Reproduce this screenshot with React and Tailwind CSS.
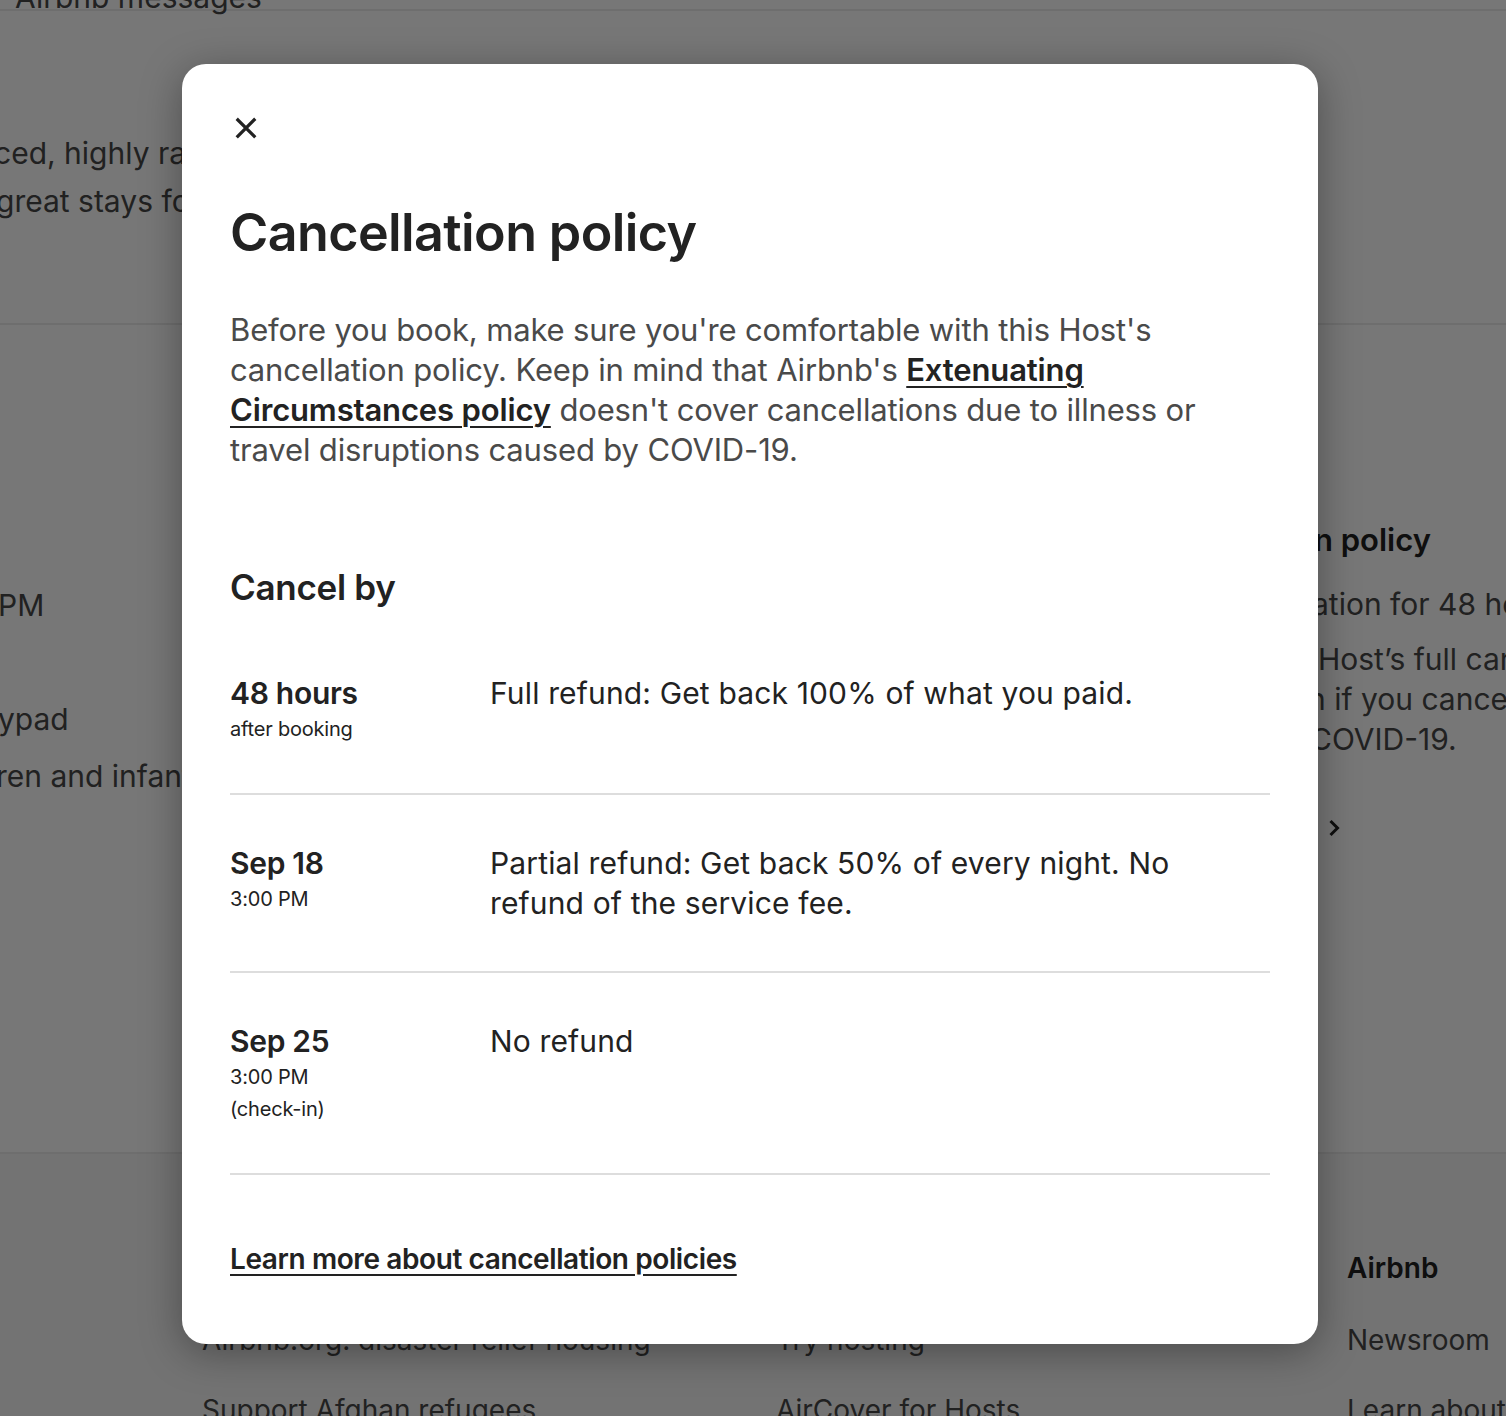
import React from "react";

const font = { fontFamily: "Inter, 'Noto Sans', sans-serif" };

function CloseIcon() {
  return (
    <svg viewBox="0 0 32 32" className="w-[26px] h-[26px]" fill="none" stroke="#222" strokeWidth="4" strokeLinecap="square">
      <path d="M6 6l20 20M26 6L6 26" />
    </svg>
  );
}

function Row({ title, sub, text }) {
  return (
    <div className="flex border-b-2 border-[#dddddd] pt-[48px] pb-[48px]">
      <div className="w-[260px] shrink-0">
        <div className="text-[30px] leading-[40px] font-semibold text-[#222] tracking-[-0.3px]">{title}</div>
        {sub.map((s, i) => (
          <div key={i} className="text-[20px] leading-[32px] text-[#222] tracking-[-0.2px]">{s}</div>
        ))}
      </div>
      <div className="flex-1 text-[30px] leading-[40px] text-[#222] tracking-[0.15px] pr-[60px]">{text}</div>
    </div>
  );
}

export default function App() {
  return (
    <div className="relative w-[1506px] h-[1416px] overflow-hidden bg-white" style={font}>
      {/* Background page */}
      <div className="-mt-[34px] text-[#484848] text-[30px]">
        <div className="h-[43px] flex items-end">
          <div className="whitespace-nowrap leading-[44px] -ml-[2px] translate-y-[10px]">· Airbnb messages</div>
        </div>
        <div className="border-t-2 border-[#ebebeb] h-[314px] pt-[118px]">
          <div className="whitespace-nowrap leading-[48px] -ml-[6px]">ced, highly rated Hosts who are committed</div>
          <div className="whitespace-nowrap leading-[48px] -ml-[4px]">great stays for guests.</div>
        </div>
        <div className="border-t-2 border-[#ebebeb] h-[829px] flex">
          <div className="w-[1308px] shrink-0 pt-[252px]">
            <div className="whitespace-nowrap leading-[57px] -ml-[2px]">PM</div>
            <div className="whitespace-nowrap leading-[57px]">&nbsp;</div>
            <div className="whitespace-nowrap leading-[57px] -ml-[2px]">ypad</div>
            <div className="whitespace-nowrap leading-[57px] -ml-[4px]">ren and infants</div>
          </div>
          <div className="flex-1 pt-[193px] whitespace-nowrap">
            <div className="text-[31px] leading-[44px] font-semibold text-[#222] pl-[6px]">n policy</div>
            <div className="mt-[22px] leading-[40px] pl-[4px]">ation for 48 hours.</div>
            <div className="mt-[15px] leading-[40px] pl-[10px]">Host’s full cancellation</div>
            <div className="leading-[40px]">n if you cancel because of</div>
            <div className="leading-[40px] pl-[2px]">COVID-19.</div>
            <div className="mt-[60px] pl-[20px]">
              <svg viewBox="0 0 12 18" className="w-[12px] h-[18px]" fill="none" stroke="#222" strokeWidth="3">
                <path d="M2.5 2l7 7-7 7" />
              </svg>
            </div>
          </div>
        </div>
        <div className="border-t-2 border-[#ebebeb] bg-[#f7f7f7] pt-[94px] pl-[202px] grid grid-cols-[574px_571px_1fr] text-[28px]">
          {[
            ["Support", "Airbnb.org: disaster relief housing", "Support Afghan refugees"],
            ["Hosting", "Try hosting", "AirCover for Hosts"],
            ["Airbnb", "Newsroom", "Learn about new features"],
          ].map((col, i) => (
            <div key={i} className="whitespace-nowrap">
              <div className="font-semibold text-[#222] leading-[40px]">{col[0]}</div>
              <div className="mt-[32px] leading-[40px]">{col[1]}</div>
              <div className="mt-[30px] leading-[40px]">{col[2]}</div>
            </div>
          ))}
        </div>
      </div>

      {/* Overlay */}
      <div className="absolute inset-0 bg-black/[0.533]" />

      {/* Modal */}
      <div className="absolute left-[182px] top-[64px] w-[1136px] h-[1280px] bg-white rounded-[24px] shadow-[0_8px_40px_rgba(0,0,0,0.35)] px-[48px] pt-[48px]">
        <button className="w-[32px] h-[32px] flex items-center justify-center">
          <CloseIcon />
        </button>
        <h1 className="mt-[61px] text-[52px] leading-[56px] font-semibold text-[#222] tracking-[-0.6px]">Cancellation policy</h1>
        <p className="mt-[49px] text-[31px] leading-[40px] text-[#4a4a4a] tracking-[-0.15px] pr-[60px]">
          Before you book, make sure you're comfortable with this Host's cancellation policy. Keep in mind that Airbnb's{" "}
          <a className="font-semibold text-[#222] underline underline-offset-[5px] decoration-2">Extenuating Circumstances policy</a>{" "}
          doesn't cover cancellations due to illness or travel disruptions caused by COVID-19.
        </p>
        <h2 className="mt-[95px] text-[35px] leading-[44px] font-semibold text-[#222] tracking-[-0.3px]">Cancel by</h2>
        <div className="mt-[16px]">
          <Row title="48 hours" sub={["after booking"]} text="Full refund: Get back 100% of what you paid." />
          <Row title="Sep 18" sub={["3:00 PM"]} text="Partial refund: Get back 50% of every night. No refund of the service fee." />
          <Row title="Sep 25" sub={["3:00 PM", "(check-in)"]} text="No refund" />
        </div>
        <div className="pt-[64px]">
          <a className="text-[28px] leading-[40px] font-semibold text-[#222] underline underline-offset-[5px] decoration-2 tracking-[-0.4px]">
            Learn more about cancellation policies
          </a>
        </div>
      </div>
    </div>
  );
}
